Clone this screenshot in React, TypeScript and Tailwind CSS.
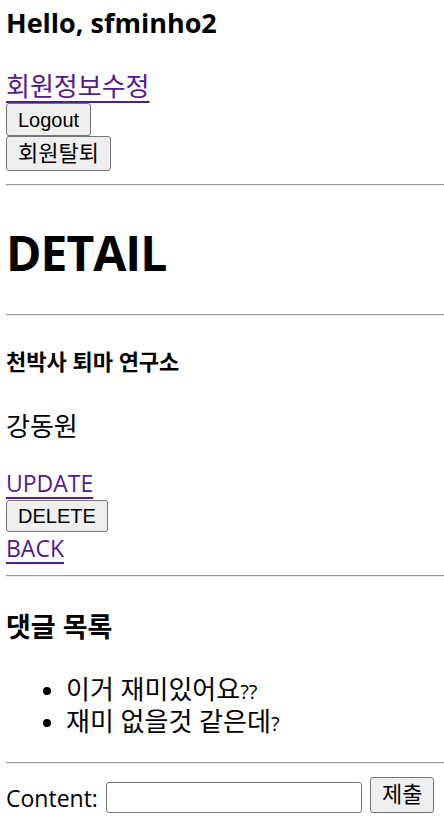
import React from "react";

const body = "font-['Open_Sans','Noto_Sans_CJK_KR',sans-serif]";
const btn =
  "block bg-[#efefef] border border-[#767676] rounded-[3px] px-[11px] text-[20px] text-black font-['Liberation_Sans','Noto_Sans_CJK_KR',sans-serif] leading-none";
const link =
  "text-[#551a8b] underline decoration-[2px] underline-offset-[5px] leading-[33px] h-[33px] block w-fit";
const hr = "border-0 border-t border-t-[#9a9a9a] border-b border-b-[#eeeeee] h-[2px]";

export default function App() {
  return (
    <div className={`${body} text-black bg-white pl-[6px] text-[23px] min-h-[827px]`}>
      <h3 className="font-bold text-[27px] leading-[33px] pt-[6px]">Hello, sfminho2</h3>
      <a href="#" className={`${link} mt-[31px] text-[26px]`}>
        회원정보수정
      </a>
      <button className={`${btn} h-[33px] mt-0`}>Logout</button>
      <button className={`${btn} h-[35px] text-[22px]`}>회원탈퇴</button>
      <div className={`${hr} mt-[13px]`} />
      <h1 className="font-bold text-[48px] tracking-[-1px] leading-[67px] mt-[33px] h-[67px]">DETAIL</h1>
      <div className={`${hr} mt-[28px]`} />
      <h4 className="font-bold text-[22px] leading-[33px] mt-[29px]">천박사 퇴마 연구소</h4>
      <p className="leading-[33px] mt-[32px] text-[26px]">강동원</p>
      <a href="#" className={`${link} mt-[24px]`}>
        UPDATE
      </a>
      <button className={`${btn} h-[32px]`}>DELETE</button>
      <a href="#" className={link}>
        BACK
      </a>
      <div className={`${hr} mt-[10px]`} />
      <h3 className="font-bold text-[27px] leading-[33px] mt-[33px]">댓글 목록</h3>
      <ul className="list-disc pl-[60px] mt-[30px] leading-[32px]">
        <li className="h-[32px] leading-[32px]">
          <span className="text-[26px] leading-[32px]">이거 재미있어요</span>
          <span className="text-[20px] leading-[32px]">??</span>
        </li>
        <li className="h-[32px] leading-[32px]">
          <span className="text-[26px] leading-[32px]">재미 없을것 같은데</span>
          <span className="text-[20px] leading-[32px]">?</span>
        </li>
      </ul>
      <div className={`${hr} mt-[25px]`} />
      <form className="flex items-end mt-[13px] h-[36px]" onSubmit={(e) => e.preventDefault()}>
        <label className="leading-[33px] mr-[8px] mb-[-2px]">Content:</label>
        <input
          type="text"
          className="w-[256px] h-[31px] border border-[#767676] rounded-[3px] bg-white outline-none mb-0"
        />
        <button type="submit" className={`${btn} h-[36px] ml-[8px] px-[10px] text-[22px]`}>
          제출
        </button>
      </form>
    </div>
  );
}
